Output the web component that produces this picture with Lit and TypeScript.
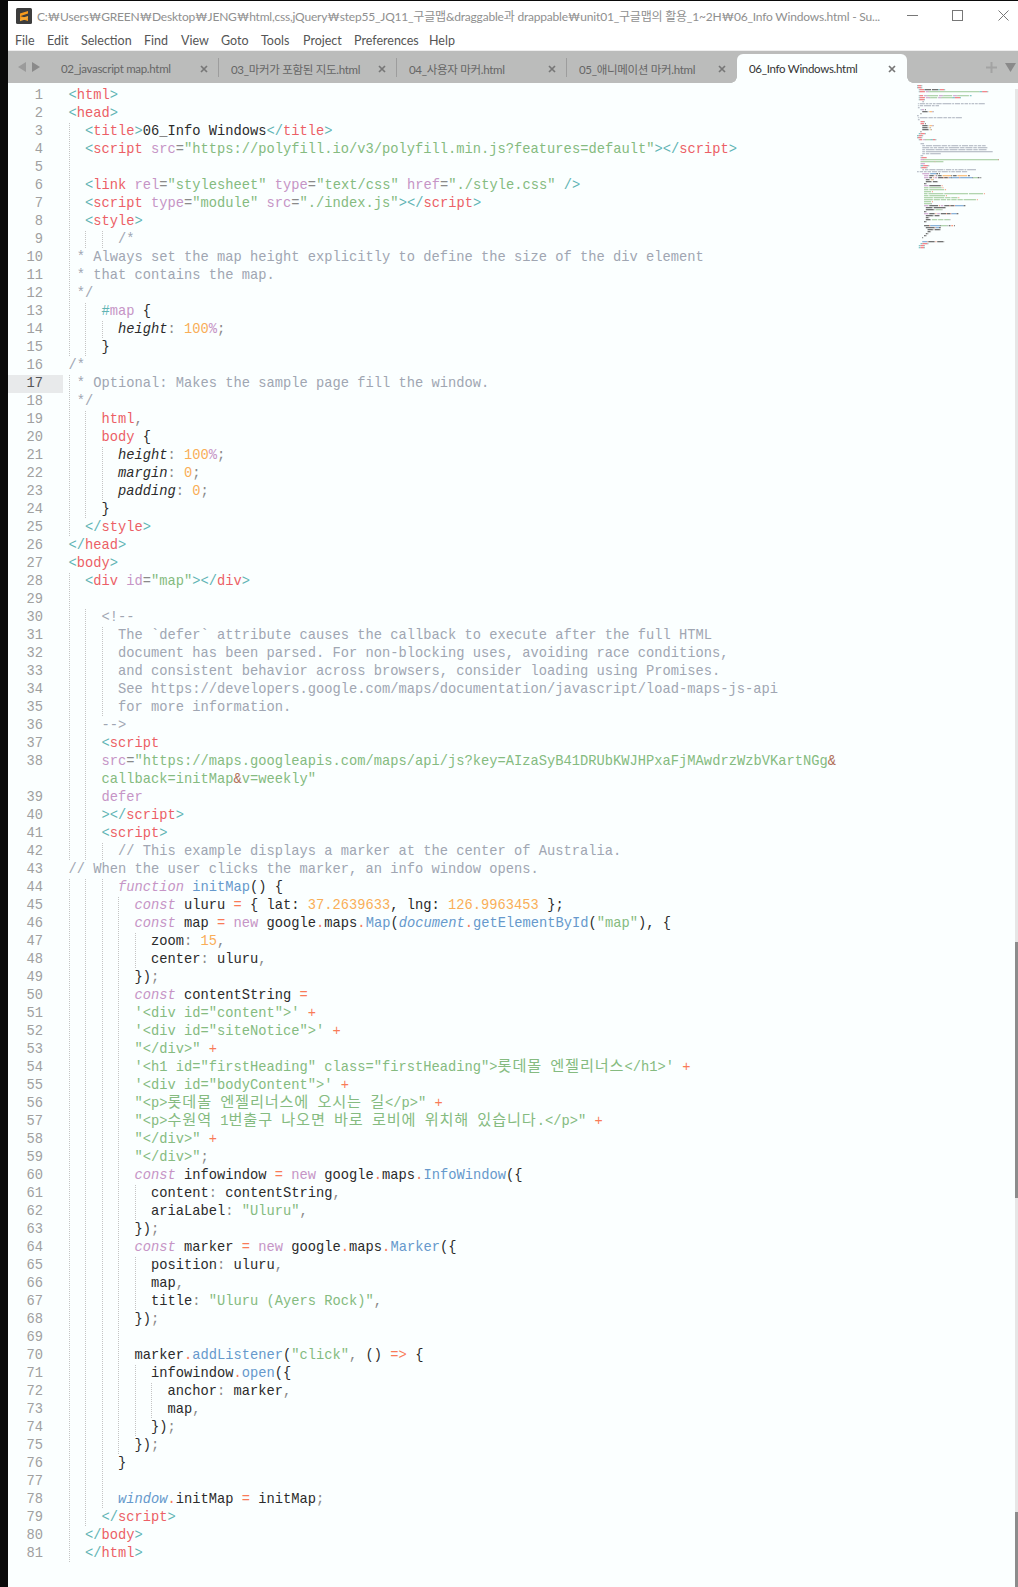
import { LitElement, html, css, svg } from "lit";
import { customElement } from "lit/decorators.js";

const SRC: string[] = [
  `§p<§thtml§p>`,
  `§p<§thead§p>`,
  `  §p<§ttitle§p>§n06_Info Windows§p</§ttitle§p>`,
  `  §p<§tscript §asrc§g=§s"https://polyfill.io/v3/polyfill.min.js?features=default"§p></§tscript§p>`,
  ``,
  `  §p<§tlink §arel§g=§s"stylesheet" §atype§g=§s"text/css" §ahref§g=§s"./style.css" §p/>`,
  `  §p<§tscript §atype§g=§s"module" §asrc§g=§s"./index.js"§p></§tscript§p>`,
  `  §p<§tstyle§p>`,
  `      §c/*`,
  ` §c* Always set the map height explicitly to define the size of the div element`,
  ` §c* that contains the map.`,
  ` §c*/`,
  `    §p#§wmap §n{`,
  `      §hheight§g: §d100§w%§g;`,
  `    §n}`,
  `§c/*`,
  ` §c* Optional: Makes the sample page fill the window.`,
  ` §c*/`,
  `    §thtml§g,`,
  `    §tbody §n{`,
  `      §hheight§g: §d100§w%§g;`,
  `      §hmargin§g: §d0§g;`,
  `      §hpadding§g: §d0§g;`,
  `    §n}`,
  `  §p</§tstyle§p>`,
  `§p</§thead§p>`,
  `§p<§tbody§p>`,
  `  §p<§tdiv §aid§g=§s"map"§p></§tdiv§p>`,
  ``,
  `    §c<!--`,
  `      §cThe \`defer\` attribute causes the callback to execute after the full HTML`,
  `      §cdocument has been parsed. For non-blocking uses, avoiding race conditions,`,
  `      §cand consistent behavior across browsers, consider loading using Promises.`,
  `      §cSee https://developers.google.com/maps/documentation/javascript/load-maps-js-api`,
  `      §cfor more information.`,
  `    §c-->`,
  `    §p<§tscript`,
  `    §asrc§g=§s"https://maps.googleapis.com/maps/api/js?key=AIzaSyB41DRUbKWJHPxaFjMAwdrzWzbVKartNGg§b&`,
  `~    §scallback=initMap§b&§sv=weekly"`,
  `    §adefer`,
  `    §p></§tscript§p>`,
  `    §p<§tscript§p>`,
  `      §c// This example displays a marker at the center of Australia.`,
  `§c// When the user clicks the marker, an info window opens.`,
  `      §kfunction §finitMap§n() {`,
  `        §kconst §nuluru §o= §n{ lat: §d37.2639633§n, lng: §d126.9963453 §n};`,
  `        §kconst §nmap §o= §wnew §ngoogle§o.§nmaps§o.§fMap§n(§edocument§o.§fgetElementById§n(§s"map"§n), {`,
  `          §nzoom§g: §d15§g,`,
  `          §ncenter§g: §nuluru§g,`,
  `        §n})§g;`,
  `        §kconst §ncontentString §o=`,
  `        §s'<div id="content">' §o+`,
  `        §s'<div id="siteNotice">' §o+`,
  `        §s"</div>" §o+`,
  `        §s'<h1 id="firstHeading" class="firstHeading">롯데몰 엔젤리너스</h1>' §o+`,
  `        §s'<div id="bodyContent">' §o+`,
  `        §s"<p>롯데몰 엔젤리너스에 오시는 길</p>" §o+`,
  `        §s"<p>수원역 1번출구 나오면 바로 로비에 위치해 있습니다.</p>" §o+`,
  `        §s"</div>" §o+`,
  `        §s"</div>"§g;`,
  `        §kconst §ninfowindow §o= §wnew §ngoogle§o.§nmaps§o.§fInfoWindow§n({`,
  `          §ncontent§g: §ncontentString§g,`,
  `          §nariaLabel§g: §s"Uluru"§g,`,
  `        §n})§g;`,
  `        §kconst §nmarker §o= §wnew §ngoogle§o.§nmaps§o.§fMarker§n({`,
  `          §nposition§g: §nuluru§g,`,
  `          §nmap§g,`,
  `          §ntitle§g: §s"Uluru (Ayers Rock)"§g,`,
  `        §n})§g;`,
  ``,
  `        §nmarker§o.§faddListener§n(§s"click"§g, §n() §o=> §n{`,
  `          §ninfowindow§o.§fopen§n({`,
  `            §nanchor§g: §nmarker§g,`,
  `            §nmap§g,`,
  `          §n})§g;`,
  `        §n})§g;`,
  `      §n}`,
  ``,
  `      §ewindow§o.§ninitMap §o= §ninitMap§g;`,
  `    §p</§tscript§p>`,
  `  §p</§tbody§p>`,
  `  §p</§thtml§p>`,
];

type Seg = { c: string; t: string };
type Row = { n: string; indent: number; segs: Seg[]; blank: boolean };

function parse(): Row[] {
  let num = 0;
  const rows: Row[] = SRC.map((raw) => {
    const wrapped = raw.startsWith("~");
    const s = wrapped ? raw.slice(1) : raw;
    const parts = s.split("§");
    const lead = parts[0];
    const segs = parts.slice(1).map((p) => ({ c: p[0], t: p.slice(1) }));
    if (!wrapped) num++;
    return {
      n: wrapped ? "" : String(num),
      indent: lead.length,
      segs,
      blank: segs.length === 0,
    };
  });
  rows.forEach((r, i) => {
    if (r.blank) {
      const prev = rows[i - 1]?.indent ?? 0;
      const next = rows[i + 1]?.indent ?? 0;
      r.indent = Math.min(prev, next);
    }
  });
  return rows;
}

const ROWS = parse();

const MINI: Record<string, string> = {
  p: "#5fb4b4", t: "#ec5f66", a: "#c695c6", s: "#99c794", c: "#a7adba", n: "#444",
  o: "#f97b58", f: "#6699cc", d: "#f9ae58", k: "#c695c6", w: "#c695c6", e: "#6699cc",
  h: "#444", g: "#999", b: "#b0705a",
};

const MENU = [
  { t: "File", w: 32 },
  { t: "Edit", w: 34 },
  { t: "Selection", w: 63 },
  { t: "Find", w: 37 },
  { t: "View", w: 40 },
  { t: "Goto", w: 40 },
  { t: "Tools", w: 42 },
  { t: "Project", w: 51 },
  { t: "Preferences", w: 75 },
  { t: "Help", w: 40 },
];

@customElement("app-root")
export class AppRoot extends LitElement {
  static styles = css`
    :host { display: block; width: 1018px; height: 1587px; overflow: hidden; background: #0a0a0a; }
    .win { margin: 1px 0 0 8px; height: 1586px; display: flex; flex-direction: column; background: #fbffff; }
    .title { height: 29px; background: #fff; display: flex; align-items: center; padding-left: 8px; flex: none; }
    .logo { width: 16px; height: 16px; flex: none; }
    .title-text { margin-left: 5px; flex: none; width: 860px; font: 12px Lato, "Noto Sans CJK KR", sans-serif; letter-spacing: -0.2px; color: #8f8f8f; white-space: pre; overflow: hidden; }
    .ctrls { display: flex; align-items: center; gap: 15.5px; flex: none; }
    .ctrl { width: 30px; display: flex; justify-content: center; }
    .ctrl svg { width: 11px; height: 11px; }
    .menu { height: 20px; background: #fff; display: flex; align-items: center; padding-left: 7px; flex: none; font: 12.5px Lato, sans-serif; color: #555; }
    .rule { height: 1px; background: #eeeeee; flex: none; }
    .tabs { height: 32px; background: #bbbcbb; display: flex; flex: none; }
    .nav { width: 41px; display: flex; align-items: center; padding-left: 10px; gap: 6px; box-sizing: border-box; flex: none; }
    .tab { width: 170px; flex: none; box-sizing: border-box; margin-top: 3px; height: 29px; display: flex; align-items: center; padding: 0 10px 0 12px; position: relative; font: 11.5px Lato, "Noto Sans CJK KR", sans-serif; letter-spacing: -0.3px; color: #666; white-space: pre; }
    .tab.wide { width: 178px; }
    .tab .name { flex: 1; }
    .tab.sep::after { content: ""; position: absolute; right: 0; top: 4px; height: 19px; width: 1px; background: #9d9d9d; }
    .tab.on { background: #fbffff; color: #333; border-radius: 6px 6px 0 0; }
    .tab.on::before, .tab.on::after { content: ""; position: absolute; bottom: 0; width: 6px; height: 6px; }
    .tab.on::before { left: -6px; background: radial-gradient(circle at 0 0, transparent 5.5px, #fbffff 6px); }
    .tab.on::after { right: -6px; background: radial-gradient(circle at 100% 0, transparent 5.5px, #fbffff 6px); }
    .x { width: 8px; height: 8px; flex: none; margin-right: 1px; }
    .tabtools { margin-left: auto; display: flex; align-items: center; gap: 8px; padding-right: 2px; }
    .editor { flex: 1; display: flex; min-height: 0; }
    .rows { flex: none; width: 907px; padding-top: 4px; }
    .row { display: flex; height: 18px; }
    .num { width: 55px; flex: none; box-sizing: border-box; padding-right: 20px; text-align: right; font: 13.75px/18px "Liberation Mono", monospace; color: #a0a0a0; }
    .num.cur { background: #e8eaeb; color: #555; }
    .code { margin-left: 5.5px; white-space: pre; font: 13.75px/18px "Liberation Mono", "Noto Sans CJK KR", monospace; display: block; height: 18px; }
    .ind { display: inline-block; width: 16.5px; height: 18px; vertical-align: top; background: linear-gradient(#c4c4c4 50%, transparent 50%) left top / 1px 2px repeat-y; }
    .ind.one { width: 8.25px; }
    .ko { font-family: "Noto Sans CJK KR", sans-serif; font-size: 15.2px; letter-spacing: 0.85px; line-height: 0; }
    .n { color: #2b2b2b; }
    .p { color: #5fb4b4; }
    .t { color: #ec5f66; }
    .a { color: #c695c6; }
    .s { color: #85bb80; }
    .c { color: #a0a6b2; }
    .o { color: #f97b58; }
    .f { color: #6699cc; }
    .d { color: #f9ae58; }
    .k { color: #c695c6; font-style: italic; }
    .w { color: #c695c6; }
    .e { color: #6699cc; font-style: italic; }
    .h { color: #2b2b2b; font-style: italic; }
    .g { color: #8a8a8a; }
    .b { color: #b0705a; }
    .mini { flex: none; width: 100px; padding-top: 2px; }
    .mini svg { display: block; filter: blur(0.3px); }
    .bar { flex: none; width: 3px; display: flex; flex-direction: column; padding-top: 6px; }
    .track1 { height: 853px; background: #e6e6e6; }
    .thumb1 { height: 256px; background: #8c8c8c; }
    .track2 { height: 314px; background: #e6e6e6; }
    .thumb2 { flex: 1; background: #8c8c8c; }
  `;

  private seg(s: Seg) {
    const bits = s.t.split(/([\uAC00-\uD7A3]+)/);
    return html`<span class=${s.c}>${bits.map((b, i) =>
      i % 2 ? html`<span class="ko">${b}</span>` : b
    )}</span>`;
  }

  private guides(indent: number) {
    const out = [];
    for (let k = 0; k < indent; k += 2) {
      out.push(html`<span class=${indent - k >= 2 ? "ind" : "ind one"}></span>`);
    }
    return out;
  }

  private minimap() {
    const rects: unknown[] = [];
    ROWS.forEach((r, i) => {
      let col = r.indent;
      for (const s of r.segs) {
        let pos = 0;
        for (const w of s.t.split(/( +)/)) {
          if (w.trim().length) {
            const cw = w.replace(/[\uAC00-\uD7A3]/g, "xx").length;
            rects.push(svg`<rect x=${2 + (col + pos) * 0.88} y=${i * 2} width=${cw * 0.88} height="1.3" fill=${MINI[s.c]} opacity=".75"></rect>`);
            pos += cw;
          } else pos += w.length;
        }
        col += pos;
      }
    });
    return html`<svg width="100" height="180" viewBox="0 0 100 180">${rects}</svg>`;
  }

  render() {
    const tabs = [
      { t: "02_javascript map.html", cls: "tab sep" },
      { t: "03_마커가 포함된 지도.html", cls: "tab wide sep" },
      { t: "04_사용자 마커.html", cls: "tab sep" },
      { t: "05_애니메이션 마커.html", cls: "tab" },
      { t: "06_Info Windows.html", cls: "tab on" },
    ];
    return html`
      <div class="win">
        <div class="title">
          <svg class="logo" viewBox="0 0 16 16">
            <rect width="16" height="16" rx="1.5" fill="#3d3d3d"></rect>
            <path d="M4 5.600 12 3v2.600L4 8.200zM4 8 12 10.400V13L4 10.600z" fill="#f89b1c"></path>
            <path d="M4 10.600 12 8v2.600L4 13.200z" fill="#f7a833"></path>
          </svg>
          <span class="title-text">C:₩Users₩GREEN₩Desktop₩JENG₩html,css,jQuery₩step55_JQ11_구글맵&draggable과 drappable₩unit01_구글맵의 활용_1~2H₩06_Info Windows.html - Su...</span>
          <div class="ctrls">
            <span class="ctrl"><svg viewBox="0 0 11 11"><path d="M0 5.500h11" stroke="#777" fill="none"></path></svg></span>
            <span class="ctrl"><svg viewBox="0 0 11 11"><rect x=".5" y=".5" width="10" height="10" stroke="#777" fill="none"></rect></svg></span>
            <span class="ctrl"><svg viewBox="0 0 11 11"><path d="M.5.5l10 10M10.500.5l-10 10" stroke="#777" fill="none"></path></svg></span>
          </div>
        </div>
        <div class="menu">
          ${MENU.map((m) => html`<span style="width:${m.w}px">${m.t}</span>`)}
        </div>
        <div class="rule"></div>
        <div class="tabs">
          <div class="nav">
            <svg width="8" height="10" viewBox="0 0 8 10"><path d="M8 0v10L0 5z" fill="#9b9b9b"></path></svg>
            <svg width="8" height="10" viewBox="0 0 8 10"><path d="M0 0v10l8-5z" fill="#8a8a8a"></path></svg>
          </div>
          ${tabs.map((t) => html`<div class=${t.cls}>
            <span class="name">${t.t}</span>
            <svg class="x" viewBox="0 0 8 8"><path d="M1 1l6 6M7 1L1 7" stroke="#777" stroke-width="1.7" fill="none"></path></svg>
          </div>`)}
          <div class="tabtools">
            <svg width="11" height="11" viewBox="0 0 11 11"><path d="M5.500 0v11M0 5.500h11" stroke="#a3a3a3" stroke-width="2" fill="none"></path></svg>
            <svg width="11" height="9" viewBox="0 0 11 9"><path d="M0 0h11L5.500 9z" fill="#8a8a8a"></path></svg>
          </div>
        </div>
        <div class="editor">
          <div class="rows">
            ${ROWS.map((r) => html`<div class="row">
              <span class=${r.n === "17" ? "num cur" : "num"}>${r.n}</span>
              <div class="code">${this.guides(r.indent)}${r.segs.map((s) => this.seg(s))}</div>
            </div>`)}
          </div>
          <div class="mini">${this.minimap()}</div>
          <div class="bar">
            <div class="track1"></div>
            <div class="thumb1"></div>
            <div class="track2"></div>
            <div class="thumb2"></div>
          </div>
        </div>
      </div>
    `;
  }
}
